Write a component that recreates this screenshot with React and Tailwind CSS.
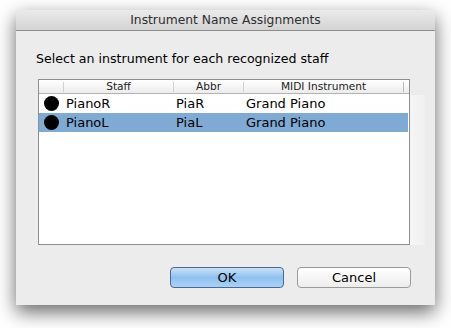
import React from "react";

const rows = [
  { staff: "PianoR", abbr: "PiaR", midi: "Grand Piano", selected: false },
  { staff: "PianoL", abbr: "PiaL", midi: "Grand Piano", selected: true },
];

export default function App() {
  return (
    <div
      className="w-[451px] h-[328px] bg-white pt-[10px] pl-[16px] overflow-hidden"
      style={{ fontFamily: '"DejaVu Sans", "Liberation Sans", sans-serif' }}
    >
      <div className="w-[419px] h-[295px] bg-[#ececec] flex flex-col shadow-[0_7px_18px_rgba(0,0,0,0.6)]">
        {/* title bar */}
        <div className="h-[21px] shrink-0 flex items-center justify-center bg-gradient-to-b from-[#ebebeb] to-[#d3d3d3] border-b border-[#8c8c8c] text-[12.3px] text-[#2e2e2e]">
          Instrument Name Assignments
        </div>

        <div className="flex flex-col pl-[22px] pt-[20px]">
          <div className="h-[16px] -ml-[2px] leading-[16px] text-[12.6px] text-black">
            Select an instrument for each recognized staff
          </div>

          <div className="flex mt-[12px]">
            <div className="w-[372px] h-[166px] bg-white border border-[#8e8e8e] flex flex-col">
              {/* header */}
              <div className="h-[14px] flex bg-gradient-to-b from-white to-[#ececec] border-b border-[#b3b3b3] text-[10.6px] leading-[13px] text-[#222]">
                <div className="w-[25px] flex items-center justify-end">
                  <div className="w-px h-[10px] bg-[#d0d0d0]" />
                </div>
                <div className="w-[110px] flex items-center">
                  <span className="flex-1 text-center">Staff</span>
                  <div className="w-px h-[10px] bg-[#d0d0d0]" />
                </div>
                <div className="w-[70px] flex items-center">
                  <span className="flex-1 text-center">Abbr</span>
                  <div className="w-px h-[10px] bg-[#d0d0d0]" />
                </div>
                <div className="w-[160px] flex items-center">
                  <span className="flex-1 text-center">MIDI Instrument</span>
                  <div className="w-px h-[10px] bg-[#b8b8b8]" />
                </div>
              </div>
              {rows.map((r) => (
                <div
                  key={r.staff}
                  className={`h-[19px] mr-px flex items-center text-[13px] text-black ${
                    r.selected ? "bg-[#7eaad3]" : "bg-white"
                  }`}
                >
                  <div className="w-[25px] flex items-center justify-center">
                    <div className="w-[15px] h-[15px] rounded-full bg-black" />
                  </div>
                  <div className="w-[110px] pl-[2px]">{r.staff}</div>
                  <div className="w-[70px] pl-[2px]">{r.abbr}</div>
                  <div className="pl-[2px]">{r.midi}</div>
                </div>
              ))}
            </div>
            <div className="w-[15px] h-[150px] mt-[16px] bg-gradient-to-r from-[#f6f6f6] to-[#f0f0f0]" />
          </div>

          <div className="flex mt-[22px] pl-[132px] gap-[13px]">
            <button className="w-[114px] h-[21px] rounded-[4px] border border-[#4f6592] bg-gradient-to-b from-[#c9e1f8] via-[#8fc1ef] to-[#a9d3f7] text-[13px] leading-[19px] text-black">
              OK
            </button>
            <button className="w-[114px] h-[21px] rounded-[4px] border border-[#9a9a9a] bg-gradient-to-b from-white to-[#ededed] text-[13px] leading-[19px] text-black">
              Cancel
            </button>
          </div>
        </div>
      </div>
    </div>
  );
}
